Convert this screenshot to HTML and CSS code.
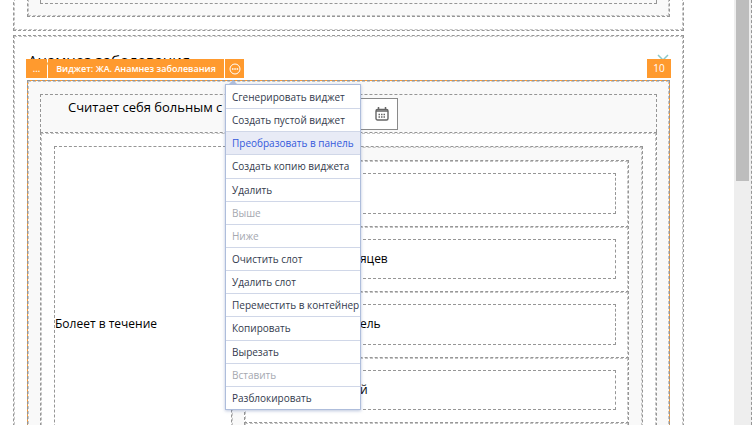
FILE: index.html
```html
<!DOCTYPE html>
<html lang="ru">
<head>
<meta charset="utf-8">
<title>Анамнез заболевания</title>
<link rel="stylesheet" href="styles.css">
</head>
<body>
<main class="canvas">
  <section class="panel panel-previous">
    <div class="slot slot-previous"><div class="slot-content"></div></div>
  </section>
  <section class="panel">
    <header class="panel-header">
      <h1>Анамнез заболевания</h1>
      <button class="close" type="button" aria-label="Закрыть">
        <svg width="12" height="12" viewBox="0 0 12 12"><path d="M1 1l10 10M11 1L1 11" fill="none" stroke="#8cc9c9" stroke-width="1.5"/></svg>
      </button>
    </header>
    <div class="widget">
      <div class="toolbar">
        <button class="tool tool-path" type="button">...</button>
        <button class="tool tool-title" type="button">Виджет: ЖА. Анамнез заболевания</button>
        <button class="tool tool-more" type="button" aria-label="Действия">
          <svg width="12" height="12" viewBox="0 0 12 12"><circle cx="6" cy="6" r="5" fill="none" stroke="#fff"/><path d="M3 6h1.5M5.3 6h1.5M7.6 6h1.5" stroke="#fff" stroke-width="1.5"/></svg>
        </button>
        <ul class="menu">
          <li><button type="button">Сгенерировать виджет</button></li>
          <li><button type="button">Создать пустой виджет</button></li>
          <li><button class="active" type="button">Преобразовать в панель</button></li>
          <li><button type="button">Создать копию виджета</button></li>
          <li><button type="button">Удалить</button></li>
          <li><button type="button" disabled>Выше</button></li>
          <li><button type="button" disabled>Ниже</button></li>
          <li><button type="button">Очистить слот</button></li>
          <li><button type="button">Удалить слот</button></li>
          <li><button type="button">Переместить в контейнер</button></li>
          <li><button type="button">Копировать</button></li>
          <li><button type="button">Вырезать</button></li>
          <li><button type="button" disabled>Вставить</button></li>
          <li><button type="button">Разблокировать</button></li>
        </ul>
      </div>
      <span class="badge">10</span>
      <div class="date-row">
        <label for="since">Считает себя больным с</label>
        <div class="date-field">
          <input id="since" type="text">
          <button type="button" aria-label="Календарь">
            <svg width="14" height="14" viewBox="0 0 14 14"><rect x="1" y="2.5" width="12" height="10.5" rx="1.5" fill="none" stroke="#666" stroke-width="1.4"/><path d="M1 4h12M3.5 0v3M10.5 0v3" stroke="#666" stroke-width="1.5"/><path d="M3.5 7.5h7M3.5 10h7" stroke="#666" stroke-width="1.3" stroke-dasharray="1.5 1"/></svg>
          </button>
        </div>
      </div>
      <div class="block">
        <div class="columns">
          <div class="caption">Болеет в течение</div>
          <div class="periods">
            <div class="period-list">
              <div class="period"><div class="cell"></div></div>
              <div class="period"><div class="cell">месяцев</div></div>
              <div class="period"><div class="cell">недель</div></div>
              <div class="period"><div class="cell">дней</div></div>
              <div class="period"><div class="cell"></div></div>
            </div>
          </div>
        </div>
      </div>
    </div>
  </section>
</main>
<div class="scrollbar"><div class="thumb"></div></div>
</body>
</html>
```
FILE: styles.css
```css
* { box-sizing: border-box; }

:root {
  --line: #969696;
  --line-soft: #c4c4c4;
  --shade: #f9f9f9;
  --accent: #ff9a2e;
}

body {
  margin: 0;
  height: 100vh;
  display: flex;
  overflow: hidden;
  background: #fff;
  color: #000;
  font: 13px/18px "Open Sans", "Noto Sans", sans-serif;
}

button, input { font: inherit; color: inherit; }

button {
  margin: 0;
  padding: 0;
  border: 0;
  background: none;
}

.canvas {
  flex: 1;
  min-width: 0;
  height: 100%;
  overflow: hidden;
  padding: 0 50px 0 13px;
}

.scrollbar {
  width: 18px;
  margin-right: 2px;
  padding: 0 2px;
  background: #eee;
  border-right: 1px dashed var(--line);
}

.thumb {
  height: 181px;
  background: #bdbdbd;
}

.panel, .slot, .periods, .block, .widget {
  border: 1px dashed var(--line);
  outline: 1px dashed var(--line-soft);
  outline-offset: -2px;
}

.panel {
  padding: 0 13px;
  margin-bottom: 4px;
}

.panel-previous {
  margin-top: -3px;
  padding-bottom: 13px;
}

.slot {
  padding: 0 12px 12px;
  background: var(--shade);
}

.slot-content {
  height: 5px;
  border: 1px dashed var(--line);
  border-top: 0;
}

.panel-header {
  height: 44px;
  display: flex;
  justify-content: space-between;
  align-items: center;
  padding: 4px 1px 0;
}

h1 {
  margin: 0;
  font-size: 15px;
  font-weight: 400;
  line-height: 20px;
}

.close { display: flex; }

.widget {
  position: relative;
  padding: 13px 12px;
  background:
    linear-gradient(var(--shade), var(--shade)) padding-box,
    linear-gradient(var(--accent), var(--accent)) border-box;
}

.toolbar {
  position: absolute;
  top: -22px;
  left: -2px;
  z-index: 2;
  height: 19px;
  display: flex;
  gap: 1px;
}

.tool {
  display: flex;
  align-items: center;
  justify-content: center;
  background: var(--accent);
  color: #fff;
  font-size: 9px;
  font-weight: 600;
  line-height: 14px;
  white-space: nowrap;
}

.tool-path { width: 21px; }
.tool-title { width: 176px; }
.tool-more { width: 19px; }

.badge {
  position: absolute;
  top: -22px;
  right: -2px;
  width: 24px;
  background: var(--accent);
  color: #fff;
  font-size: 10px;
  line-height: 19px;
  text-align: center;
}

.menu {
  position: absolute;
  top: 25px;
  left: 199px;
  width: 136px;
  height: 326px;
  margin: 0;
  padding: 0;
  display: grid;
  grid-template-columns: minmax(0, 1fr);
  grid-auto-rows: 1fr;
  list-style: none;
  background: #fff;
  border: 1px solid #aebddb;
  box-shadow: 0 1px 3px rgba(90, 115, 170, .4);
  color: #333a4d;
  font-size: 10px;
  line-height: 14px;
}

.menu::before {
  content: "";
  position: absolute;
  left: 3px;
  top: -5px;
  border: 4px solid transparent;
  border-top: 0;
  border-bottom-color: #aebddb;
}

.menu li { display: flex; }
.menu li + li { border-top: 1px solid #d0d7e8; }

.menu button {
  flex: 1;
  min-width: 0;
  padding-left: 6px;
  text-align: left;
  white-space: nowrap;
}

.menu .active { background: #e8ebf6; color: #3559dc; }
.menu button:disabled { color: #a5a8b0; }

.date-row {
  display: flex;
  gap: 6px;
  padding: 3px 12px 2px 27px;
  border: 1px dashed var(--line);
  border-bottom: 0;
}

.date-field {
  display: flex;
  width: 170px;
  height: 32px;
  border: 1px solid #8a8a8a;
  background: #fff;
}

.date-field input {
  flex: 1;
  min-width: 0;
  border: 0;
  background: none;
}

.date-field button {
  width: 30px;
  display: flex;
  align-items: center;
  justify-content: center;
}

.block {
  padding: 13px;
  background: #fff;
}

.columns {
  display: flex;
  font-size: 12px;
}

.caption {
  width: 30%;
  display: flex;
  align-items: center;
  border: 1px dashed var(--line);
  border-right: 0;
}

.periods {
  flex: 1;
  padding: 13px 13px 13px 12px;
  background: var(--shade);
}

.period-list {
  height: 328px;
  display: grid;
  grid-auto-rows: 1fr;
  background: #fff;
}

.period {
  display: flex;
  margin-bottom: -3px;
  padding: 12px 12px 15px 13px;
  border: 1px dashed var(--line);
  outline: 1px dashed var(--line-soft);
  outline-offset: -2px;
  border-bottom: 0;
}

.cell {
  flex: 1;
  display: flex;
  align-items: center;
  padding-left: 80px;
  border: 1px dashed var(--line);
}
```
